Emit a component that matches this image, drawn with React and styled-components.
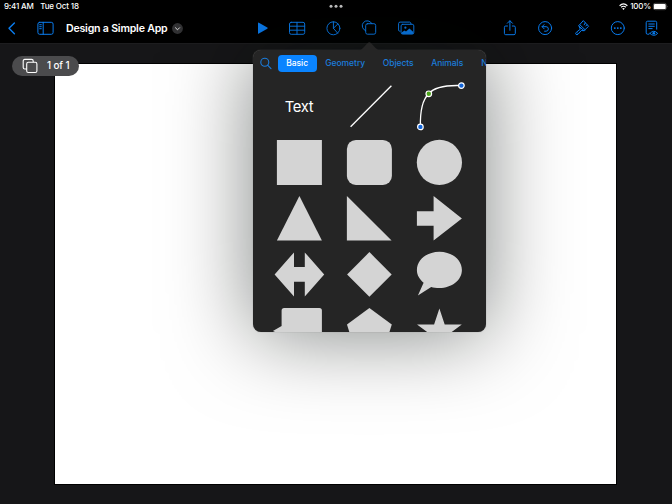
import React from "react";
import styled, { createGlobalStyle } from "styled-components";

const Global = createGlobalStyle`
  * { box-sizing: border-box; }
  body { margin: 0; background: #161618; overflow: hidden; }
`;

const Screen = styled.div`
  position: relative;
  width: 672px;
  height: 504px;
  overflow: hidden;
  background: #161618;
  color: #fff;
  font-family: Inter, "Liberation Sans", sans-serif;
`;

const Header = styled.header`
  height: 43px;
  background: #000;
`;

const StatusBar = styled.div`
  display: grid;
  grid-template-columns: 1fr 16px 1fr;
  align-items: center;
  height: 13px;
  padding: 0 4px 0 4px;
  font-size: 8px;
  font-weight: 500;
  line-height: 13px;
  white-space: nowrap;
`;

const StatusSide = styled.div`
  display: flex;
  align-items: center;
  gap: ${(p) => p.$gap}px;
  justify-content: ${(p) => (p.$end ? "flex-end" : "flex-start")};
`;

const StatusText = styled.span`
  letter-spacing: ${(p) => p.$spacing || 0}px;
`;

const Toolbar = styled.nav`
  display: flex;
  align-items: center;
  height: 30px;
  color: #0a7df0;
`;

const LeftGroup = styled.div`
  display: flex;
  align-items: center;
  width: 251px;
  padding-left: 2px;
  gap: 13px;
`;

const TitleGroup = styled.div`
  display: flex;
  align-items: center;
  gap: 4.5px;
  margin-left: -2px;
`;

const Title = styled.h1`
  margin: 0;
  padding-top: 1px;
  color: #fff;
  font-size: 10.6px;
  font-weight: 600;
  line-height: 14px;
  letter-spacing: -0.21px;
  white-space: nowrap;
`;

const IconGroup = styled.div`
  display: flex;
  gap: 16px;
  margin-left: ${(p) => p.$left || 0}px;
`;

const IconSvg = styled.svg`
  display: block;
  flex: none;
  overflow: visible;
`;

const Workspace = styled.main`
  height: 461px;
  padding: 20px 56px 20px 55px;
  border-top: 1px solid #1d1d1f;
`;

const Slide = styled.div`
  height: 420px;
  background: #fff;
  outline: 1px solid #000;
`;

const PagePill = styled.div`
  position: absolute;
  left: 12px;
  top: 56px;
  display: flex;
  align-items: center;
  gap: 9px;
  width: 67px;
  height: 20px;
  padding-left: 10px;
  border-radius: 10px;
  background: #4b4b4d;
  font-size: 9.8px;
  line-height: 20px;
  font-weight: 500;
  letter-spacing: -0.1px;
  white-space: nowrap;
`;

const Popover = styled.section`
  position: absolute;
  left: 253px;
  top: 50px;
  width: 233px;
  height: 282px;
  border-radius: 8px;
  background: #252525;
  box-shadow: 0 0 1px rgba(120, 120, 120, 0.9), 0 2px 84px rgba(0, 10, 5, 0.5);
`;

const PopoverArrow = styled.svg`
  position: absolute;
  left: 105px;
  top: -8px;
`;

const PopoverBody = styled.div`
  height: 100%;
  border-radius: 8px;
  overflow: hidden;
`;

const Tabs = styled.div`
  display: flex;
  align-items: center;
  height: 27px;
  padding-left: 7px;
`;

const Tab = styled.button`
  flex: none;
  height: 17px;
  margin: 0 0 0 ${(p) => p.$gap}px;
  padding: 0;
  width: ${(p) => p.$width}px;
  border: 0;
  border-radius: 4px;
  background: ${(p) => (p.$active ? "#0a84ff" : "transparent")};
  color: ${(p) => (p.$active ? "#fff" : "#1b7cdb")};
  font-family: inherit;
  font-size: 8.5px;
  font-weight: 500;
  line-height: 17px;
  letter-spacing: -0.05px;
  white-space: nowrap;
`;

const ShapeGrid = styled.div`
  display: grid;
  grid-template-columns: repeat(3, 70px);
  grid-template-rows: repeat(5, 56px);
  padding: 1px 11px 0;
`;

const ShapeCell = styled.div`
  display: flex;
  align-items: center;
  justify-content: center;
`;

const TextShape = styled.span`
  padding-top: 2px;
  font-size: 14.8px;
  line-height: 18px;
  letter-spacing: -0.3px;
`;

const Shape = styled.svg`
  display: block;
  overflow: visible;
  fill: #d4d4d4;
`;

function Icon({ children, size = 20, filled }) {
  return (
    <IconSvg
      width={size}
      height={size}
      viewBox={`0 0 ${size} ${size}`}
      fill={filled ? "currentColor" : "none"}
      stroke={filled ? "none" : "currentColor"}
      strokeWidth="1"
      strokeLinecap="round"
      strokeLinejoin="round"
    >
      {children}
    </IconSvg>
  );
}

const insertIcons = [
  <Icon key="play" filled>
    <path d="M7 5.2Q7 4.2 7.9 4.7L16.3 9.5Q17.2 10.1 16.3 10.7L7.9 15.6Q7 16.1 7 15.2Z" />
  </Icon>,
  <Icon key="table">
    <rect x="2.5" y="4.3" width="15.2" height="12" rx="1.7" />
    <path d="M2.5 8.2H17.7M2.5 12.2H17.7M10 4.3V16.3" />
  </Icon>,
  <Icon key="chart">
    <circle cx="10.4" cy="10.3" r="6.5" />
    <path d="M10.4 3.8V10.3L15 5.8M10.4 10.3L14.7 15.2" />
  </Icon>,
  <Icon key="shape">
    <path d="M6.7 12.7A5.1 5.1 0 1 1 12.9 5.7" />
    <rect x="6.7" y="5.7" width="10" height="10.5" rx="1.8" />
  </Icon>,
  <Icon key="media">
    <path d="M5.1 13.2H4.7Q3.6 13.2 3.6 12V5.6Q3.6 4.1 5.1 4.1H14.6Q15.9 4.1 16.1 6" />
    <rect x="6.1" y="6.3" width="12.7" height="9.8" rx="1.6" />
    <circle cx="10.4" cy="9.7" r="1.1" fill="currentColor" stroke="none" />
    <path d="M6.5 14.5L9.5 12.4L11 13.4L14.4 10.6L18.4 14V16H6.5Z" fill="currentColor" stroke="none" />
  </Icon>,
];

const actionIcons = [
  <Icon key="share">
    <path d="M7.5 8H5.7Q4.4 8 4.4 9.3V15.4Q4.4 16.7 5.7 16.7H14Q15.3 16.7 15.3 15.4V9.3Q15.3 8 14 8H12.3M9.9 12.3V2.9M7.3 5.3L9.9 2.7L12.5 5.3" />
  </Icon>,
  <Icon key="undo">
    <circle cx="9.1" cy="10.1" r="6.5" />
    <path d="M8.1 6.6L6.1 8.7L8.1 10.8M6.2 8.7H10.1A2.2 2.2 0 0 1 10.1 13.2H8.6" />
  </Icon>,
  <Icon key="brush">
    <path d="M11.6 2.9L16.6 8.3L12 12.7L6.9 8.1Z" />
    <path d="M13.2 4.9L12.2 6.8M14.9 6.8L13.8 8M8.1 7L13.1 11.7" />
    <path d="M7.2 8.5L8.3 11.2L4.3 14.3Q3.1 15.4 4 16.4Q5 17.3 6.2 16.1L9.3 12.5L12 12.7" />
    <circle cx="5.3" cy="15.1" r=".5" fill="currentColor" stroke="none" />
  </Icon>,
  <Icon key="more">
    <circle cx="9.8" cy="10.1" r="6.5" />
    <g fill="currentColor" stroke="none">
      <circle cx="6.8" cy="10.1" r=".95" />
      <circle cx="9.8" cy="10.1" r=".95" />
      <circle cx="12.8" cy="10.1" r=".95" />
    </g>
  </Icon>,
  <Icon key="document">
    <path d="M4.7 16.2H3.5Q2.2 16.2 2.2 14.9V4.6Q2.2 3.2 3.6 3.2H11.4Q12.7 3.2 12.7 4.6V11.2M4.8 6H10.3M4.8 8.3H10.3M4.8 10.6H8.2" />
    <path d="M5.9 15.4Q9.8 11.1 13.7 15.4Q9.8 19.4 5.9 15.4Z" />
    <circle cx="9.8" cy="15.3" r="1.3" fill="currentColor" stroke="none" />
  </Icon>,
];

const tabs = [
  { name: "Basic", gap: 4.7, width: 39, active: true },
  { name: "Geometry", gap: 8, width: 41 },
  { name: "Objects", gap: 16, width: 33 },
  { name: "Animals", gap: 16, width: 33 },
  { name: "Nature", gap: 17, width: 28 },
];

const shapes = [
  <path key="square" d="M2.5 2.5H47.5V47.5H2.5Z" />,
  <rect key="rounded" x="2.5" y="2.5" width="45" height="45" rx="9" />,
  <circle key="circle" cx="25" cy="25" r="22.6" />,
  <path key="triangle" d="M25 2.5L47.5 47.2H2.5Z" />,
  <path key="right" d="M2.5 2.5L47.2 47.2H2.5Z" />,
  <path key="arrow" d="M19.2 2.5L47.5 25L19.2 47.2V32.4H2.5V17.8H19.2Z" />,
  <path key="double" d="M0.2 25L19.6 3V17.7H30.4V3L49.8 25L30.4 47V32.3H19.6V47Z" />,
  <path key="diamond" d="M25 2.7L47.3 25L25 47.3L2.7 25Z" />,
  <path key="bubble" d="M9.2 33.4C5.2 30 2.5 25.7 2.5 20.6C2.5 10.5 12.5 2.3 25 2.3S47.5 10.5 47.5 20.6S37.5 38.6 25 38.6C21.8 38.6 19 38.2 16.8 37.5L3.5 46L9.2 33.4Z" />,
  <path key="callout" d="M7.2 5Q7.2 2.5 9.7 2.5H45Q47.5 2.5 47.5 5V42H7.2V30L-1.5 25.5L7.2 20.5Z" />,
  <path key="pentagon" d="M25 2.7L47.4 19.2L39 46H11L2.6 19.2Z" />,
  <path key="star" d="M25 3L30.3 19.2H47.4L33.6 29.3L38.8 45.5L25 35.5L11.2 45.5L16.4 29.3L2.6 19.2H19.7Z" />,
];

export default function App() {
  return (
    <Screen>
      <Global />
      <Header>
        <StatusBar>
          <StatusSide $gap={6.5}>
            <StatusText $spacing={-0.18}>9:41 AM</StatusText>
            <StatusText $spacing={-0.15}>Tue Oct 18</StatusText>
          </StatusSide>
          <IconSvg width="16" height="13" viewBox="0 0 16 13" fill="#c8c8c8">
            <circle cx="3" cy="6.3" r="1.5" />
            <circle cx="8" cy="6.3" r="1.5" />
            <circle cx="13" cy="6.3" r="1.5" />
          </IconSvg>
          <StatusSide $gap={2} $end>
            <IconSvg width="9" height="7" viewBox="0 0 9 7" fill="none" stroke="#fff" strokeWidth="1.2">
              <path d="M.6 2.7Q4.5-.8 8.4 2.7M2.1 4.3Q4.5 2.2 6.9 4.3" />
              <path d="M3.2 5.5Q4.5 4.5 5.8 5.5L4.5 6.9Z" fill="#fff" stroke="none" />
            </IconSvg>
            <StatusText $spacing={-0.2}>100%</StatusText>
            <IconSvg width="15" height="7" viewBox="0 0 15 7" fill="#fff">
              <rect x=".3" y=".3" width="13" height="6.4" rx="1.8" fill="none" stroke="#777" strokeWidth=".6" />
              <rect x=".9" y=".9" width="11.8" height="5.2" rx="1.2" />
              <path d="M14 2.4Q15 3.5 14 4.6Z" fill="#888" />
            </IconSvg>
          </StatusSide>
        </StatusBar>
        <Toolbar>
          <LeftGroup>
            <Icon>
              <path d="M12.4 4.9L7 10.3L12.4 15.7" strokeWidth="1.4" />
            </Icon>
            <Icon>
              <rect x="2.9" y="4.3" width="15.2" height="12" rx="1.8" />
              <path d="M8.2 4.3V16.3M4.7 6.7H6.3M4.7 8.7H6.3M4.7 10.7H6.3" />
            </Icon>
            <TitleGroup>
              <Title>Design a Simple App</Title>
              <IconSvg width="11" height="11" viewBox="0 0 11 11" fill="none">
                <circle cx="5.5" cy="5.5" r="5.4" fill="#323234" />
                <path d="M3.2 4.5L5.5 6.8L7.8 4.5" stroke="#ddd" strokeWidth="1" />
              </IconSvg>
            </TitleGroup>
          </LeftGroup>
          <IconGroup>{insertIcons}</IconGroup>
          <IconGroup $left={85}>{actionIcons}</IconGroup>
        </Toolbar>
      </Header>
      <Workspace>
        <Slide />
      </Workspace>
      <PagePill>
        <IconSvg width="16" height="16" viewBox="0 0 16 16" fill="none" stroke="#fff" strokeWidth="1.1">
          <path d="M4.7 11H2.8Q1.2 11 1.2 9.4V3Q1.2 1.4 2.8 1.4H9.6Q11.2 1.4 11.2 3V4.3" />
          <rect x="4.7" y="4.3" width="10.2" height="10.2" rx="1.6" />
        </IconSvg>
        1 of 1
      </PagePill>
      <Popover>
        <PopoverArrow width="23" height="9" viewBox="0 0 23 9" fill="#252525">
          <path d="M0 8.5Q3.5 8 5 6L9.7 1Q11.3-.5 12.9 1L17.6 6Q19.5 8 23 8.5V9H0Z" />
        </PopoverArrow>
        <PopoverBody>
          <Tabs>
            <IconSvg width="13" height="13" viewBox="0 0 13 13" fill="none" stroke="#1b7cdb" strokeWidth="1.1" strokeLinecap="round">
              <circle cx="4.8" cy="5.3" r="4" />
              <path d="M7.8 8.3L11 11.6" />
            </IconSvg>
            {tabs.map((t) => (
              <Tab key={t.name} $gap={t.gap} $width={t.width} $active={t.active}>
                {t.name}
              </Tab>
            ))}
          </Tabs>
          <ShapeGrid>
            <ShapeCell>
              <TextShape>Text</TextShape>
            </ShapeCell>
            <ShapeCell>
              <Shape width="50" height="50" viewBox="-0.4 -0.2 50 50">
                <path d="M6.2 45.5L47 4.5" stroke="#fff" strokeWidth="1.3" />
              </Shape>
            </ShapeCell>
            <ShapeCell>
              <Shape width="50" height="50" viewBox="-0.4 -0.2 50 50">
                <path d="M6 45.7C5.6 28 9 17.5 14.4 12.6C20 5.5 31 3.8 47 4.4" fill="none" stroke="#fff" strokeWidth="1.3" />
                <g stroke="#fff" strokeWidth="1.2">
                  <circle cx="6" cy="45.7" r="2.8" fill="#1264d8" />
                  <circle cx="14.4" cy="12.6" r="2.8" fill="#4da51c" />
                  <circle cx="47" cy="4.4" r="2.8" fill="#1264d8" />
                </g>
              </Shape>
            </ShapeCell>
            {shapes.map((s) => (
              <ShapeCell key={s.key}>
                <Shape width="50" height="50" viewBox="-0.4 -0.4 50 50">{s}</Shape>
              </ShapeCell>
            ))}
          </ShapeGrid>
        </PopoverBody>
      </Popover>
    </Screen>
  );
}
